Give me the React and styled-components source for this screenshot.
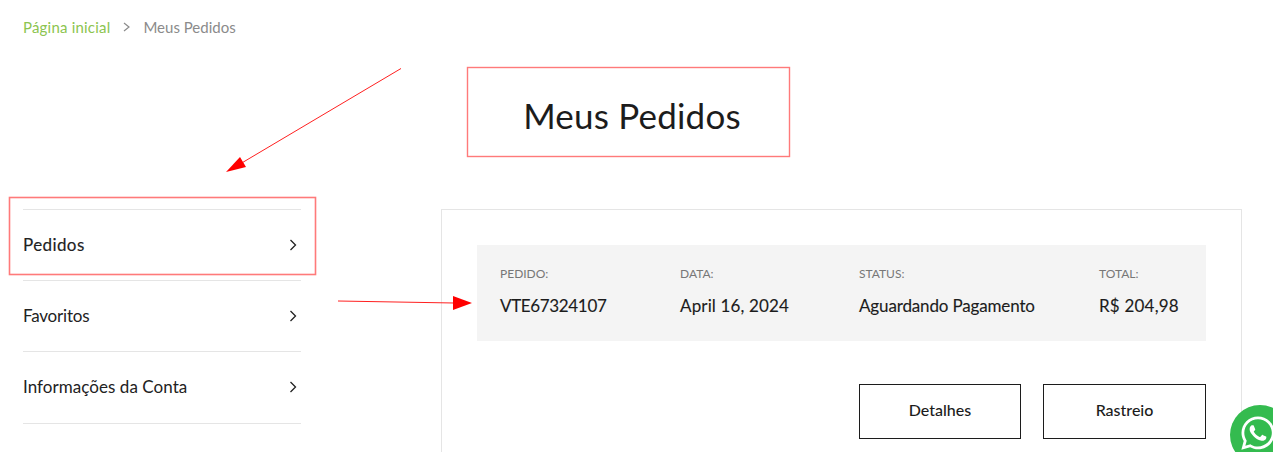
import React from "react";
import styled, { createGlobalStyle } from "styled-components";
import { FaWhatsapp } from "react-icons/fa";

const Global = createGlobalStyle`
  html, body { margin: 0; padding: 0; background: #fff; height: 452px; overflow: hidden; }
  body { font-family: "Lato", "Noto Sans", sans-serif; color: #1c1c1c; }
  * { box-sizing: border-box; }
`;
const Page = styled.div`position: relative; width: 1273px; height: 452px; overflow: hidden;`;
const Breadcrumb = styled.nav`
  display: flex; align-items: center; height: 18px; margin: 18px 0 0 23px; font-size: 15px;
`;
const Crumb = styled.span`color: ${p => p.$green ? "#8cc44f" : "#8b8b8b"}; letter-spacing: ${p => p.$green ? ".2px" : "0"};`;
const CrumbSep = styled.svg`width: 9px; height: 10px; margin: 0 12px 0 12px; fill: none; stroke: #8b8b8b; stroke-width: 1.2;`;
const Title = styled.h1`
  margin: 49px 0 0; height: 60px; width: 1264px; text-align: center; font-size: 35px; line-height: 60px; font-weight: 400; color: #1c1c1c; letter-spacing: .2px;
`;
const Main = styled.div`display: flex; align-items: flex-start; margin: 64px 0 0 23px;`;
const Sidebar = styled.ul`list-style: none; margin: 0; padding: 0; width: 278px; flex: none; border-top: 1px solid #e5e5e5;`;
const Item = styled.li`
  display: flex; align-items: center; justify-content: space-between; height: 71.2px;
  padding: ${p => p.$low ? "4px 4px 0 0" : "0 4px 2px 0"}; border-bottom: 1px solid #e5e5e5;
  font-size: 17px; color: #222; letter-spacing: ${p => p.$ls || 0}px;
  -webkit-text-stroke: ${p => p.$active ? ".15px" : "0"};
`;
const Chevron = styled.svg`width: 8px; height: 12px; margin-top: 2px; fill: none; stroke: #222; stroke-width: 1.3;`;
const Panel = styled.section`margin-left: 140px; width: 801px; height: 300px; border: 1px solid #e5e5e5; padding: 35px;`;
const Summary = styled.div`
  display: grid; grid-template-columns: 180px 179px 240px 1fr; align-items: center; height: 96px; padding: 0 23px 3px; background: #f4f4f4;
`;
const Field = styled.div`display: flex; flex-direction: column; gap: 15px;`;
const Label = styled.span`font-size: 12px; line-height: 14px; color: #777; text-transform: uppercase;`;
const Value = styled.span`font-size: 17px; line-height: 20px; color: #1c1c1c; white-space: nowrap; letter-spacing: ${p => p.$ls || 0}px; -webkit-text-stroke: .12px;`;
const Actions = styled.div`display: flex; justify-content: flex-end; gap: 22px; margin-top: 43px;`;
const Action = styled.button`
  width: ${p => p.$w}px; height: 55px; padding: 0 0 4px; background: #fff; border: 1px solid #1c1c1c; border-radius: 0; font: 500 16px "Lato", sans-serif; color: #1c1c1c;
`;
const Whats = styled.a`
  position: absolute; left: 1230px; top: 405px; width: 60px; height: 60px; padding: 0 5px 5px 0; border-radius: 50%; background: #34bb4f; color: #fff;
  display: flex; align-items: center; justify-content: center; font-size: 38px;
`;
const Overlay = styled.svg`position: absolute; inset: 0; width: 1273px; height: 452px; pointer-events: none;`;

const Chev = () => <Chevron viewBox="0 0 8 12"><path d="M1.5 1l5 5-5 5" /></Chevron>;

export default function App() {
  return (
    <Page>
      <Global />
      <Breadcrumb>
        <Crumb $green>Página inicial</Crumb>
        <CrumbSep viewBox="0 0 9 10"><path d="M2 1l5 4-5 4" /></CrumbSep>
        <Crumb>Meus Pedidos</Crumb>
      </Breadcrumb>
      <Title>Meus Pedidos</Title>
      <Main>
        <Sidebar>
          <Item $active $ls={0.4}>Pedidos<Chev /></Item>
          <Item $ls={-0.2}>Favoritos<Chev /></Item>
          <Item $ls={0.05}>Informações da Conta<Chev /></Item>
          <Item $low>Endereços<Chev /></Item>
        </Sidebar>
        <Panel>
          <Summary>
            <Field><Label>Pedido:</Label><Value $ls={-0.35}>VTE67324107</Value></Field>
            <Field><Label>Data:</Label><Value $ls={0.15}>April 16, 2024</Value></Field>
            <Field><Label>Status:</Label><Value $ls={-0.15}>Aguardando Pagamento</Value></Field>
            <Field><Label>Total:</Label><Value $ls={0.2}>R$ 204,98</Value></Field>
          </Summary>
          <Actions>
            <Action $w={162}>Detalhes</Action>
            <Action $w={163}>Rastreio</Action>
          </Actions>
        </Panel>
      </Main>
      <Whats aria-label="WhatsApp"><FaWhatsapp /></Whats>
      <Overlay viewBox="0 0 1273 452">
        <rect x="467.5" y="67.5" width="322" height="89" fill="none" stroke="#ff7a7a" strokeWidth="1.4" />
        <rect x="9.5" y="197.5" width="306" height="77" fill="none" stroke="#ff7a7a" strokeWidth="1.6" />
        <path d="M401 68.5L240 164" stroke="#ff2020" strokeWidth="1" fill="none" />
        <path d="M226 172L240 157L246 167Z" fill="#ff0000" />
        <path d="M338 301L454 303" stroke="#ff2020" strokeWidth="1" fill="none" />
        <path d="M472 303L453 296L453 310Z" fill="#ff0000" />
      </Overlay>
    </Page>
  );
}
